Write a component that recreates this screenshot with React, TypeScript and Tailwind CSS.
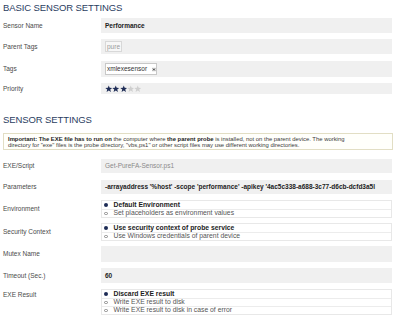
import React, { FC, ReactNode } from "react";

const font = "font-['Liberation_Sans',Arial,sans-serif]";

const Label: FC<{ text: string; className?: string }> = ({ text, className = "" }) => (
  <div className={`w-[98px] shrink-0 text-[6.5px] text-[#4a4a4a] ${className}`}>{text}</div>
);

const GrayRow: FC<{ label: string; h: string; mt: string; children?: ReactNode }> = ({ label, h, mt, children }) => (
  <div className={`flex items-center ${h} ${mt}`}>
    <Label text={label} />
    <div className="flex h-full flex-1 items-center bg-[#f0f0f0] pl-[4px] overflow-hidden whitespace-nowrap">{children}</div>
  </div>
);

const Radio: FC<{ on?: boolean; text: string; first?: boolean }> = ({ on, text, first }) => (
  <div className={`flex h-[8px] items-center pl-[2px] ${first ? "" : "border-t border-[#ececec]"}`}>
    {on ? (
      <span className="mr-[6px] h-[3.5px] w-[3.5px] rounded-full bg-[#1d2b55]" />
    ) : (
      <span className="mr-[6px] h-[3.5px] w-[3.5px] rounded-full border-[0.8px] border-[#8a8a8a]" />
    )}
    <span className={`text-[6.8px] leading-none ${on ? "font-bold text-[#1c1c1c]" : "text-[#555]"}`}>{text}</span>
  </div>
);

const OptionRow: FC<{ label: string; mt: string; options: { text: string; on?: boolean }[]; labelPt: string }> = ({ label, mt, options, labelPt }) => (
  <div className={`flex items-start ${mt}`}>
    <Label text={label} className={labelPt} />
    <div className="flex-1 border border-[#e8e8e8] bg-white">
      {options.map((o, i) => (
        <Radio key={o.text} on={o.on} text={o.text} first={i === 0} />
      ))}
    </div>
  </div>
);

const Star: FC<{ on: boolean }> = ({ on }) => (
  <svg width="7.5" height="7.5" viewBox="0 0 24 24" className="mr-[-0.2px]">
    <polygon
      points="12,1.5 15,9 23,9.3 16.8,14.3 19,22.5 12,17.8 5,22.5 7.2,14.3 1,9.3 9,9"
      fill={on ? "#1f2d57" : "#cfcfcf"}
    />
  </svg>
);

const App: FC = () => {
  return (
    <div className={`h-[333px] w-[400px] overflow-hidden bg-white pl-[3px] pr-[8px] ${font}`}>
      <h1 className="h-[18px] pt-[1px] text-[9.5px] leading-[13px] font-normal tracking-[-0.1px] text-[#2a3d5f]">
        BASIC SENSOR SETTINGS
      </h1>

      <GrayRow label="Sensor Name" h="h-[15px]" mt="mt-0">
        <span className="text-[6.5px] font-bold text-[#222]">Performance</span>
      </GrayRow>
      <GrayRow label="Parent Tags" h="h-[15px]" mt="mt-[6px]">
        <span className="border border-[#d8d8d8] bg-[#f7f7f7] px-[1px] text-[6.5px] leading-[9px] text-[#9a9a9a]">pure</span>
      </GrayRow>
      <GrayRow label="Tags" h="h-[16px]" mt="mt-[7px]">
        <span className="flex h-[12px] w-[52px] items-center border border-[#c8c8c8] bg-white pl-[1px] text-[6.5px] text-[#333]">
          xmlexesensor
          <svg width="5" height="5" viewBox="0 0 10 10" className="ml-[5px]">
            <rect x="0" y="0" width="10" height="10" fill="#e4e4e4" />
            <path d="M2.5 2.5 L7.5 7.5 M7.5 2.5 L2.5 7.5" stroke="#222" strokeWidth="2.2" />
          </svg>
        </span>
      </GrayRow>
      <GrayRow label="Priority" h="h-[11px]" mt="mt-[6px]">
        <div className="flex">
          <Star on />
          <Star on />
          <Star on />
          <Star on={false} />
          <Star on={false} />
        </div>
      </GrayRow>

      <h2 className="mt-[19px] h-[13px] text-[9.5px] leading-[13px] font-normal tracking-[-0.1px] text-[#2a3d5f]">SENSOR SETTINGS</h2>

      <div className="mt-[7px] mr-[-1px] h-[17px] border border-[#e2dec4] bg-[#fffffb] px-[4px] pt-[2px] text-[5.9px] leading-[6.3px] text-[#3a3a3a] whitespace-nowrap">
        <div>
          <b className="text-[#1c1c1c]">Important: The EXE file has to run on</b> the computer where{" "}
          <b className="text-[#1c1c1c]">the parent probe</b> is installed, not on the parent device. The working
        </div>
        <div>directory for "exe" files is the probe directory, "vbs,ps1" or other script files may use different working directories.</div>
      </div>

      <GrayRow label="EXE/Script" h="h-[14px]" mt="mt-[9px]">
        <span className="text-[6.5px] text-[#8a8a8a]">Get-PureFA-Sensor.ps1</span>
      </GrayRow>
      <GrayRow label="Parameters" h="h-[14px]" mt="mt-[7px]">
        <span className="text-[6.5px] font-bold text-[#222]">
          -arrayaddress '%host' -scope 'performance' -apikey '4ac5c338-a688-3c77-d6cb-dcfd3a5l
        </span>
      </GrayRow>

      <OptionRow
        label="Environment"
        mt="mt-[6px]"
        labelPt="pt-[4px]"
        options={[
          { text: "Default Environment", on: true },
          { text: "Set placeholders as environment values" },
        ]}
      />
      <OptionRow
        label="Security Context"
        mt="mt-[5px]"
        labelPt="pt-[4px]"
        options={[
          { text: "Use security context of probe service", on: true },
          { text: "Use Windows credentials of parent device" },
        ]}
      />

      <GrayRow label="Mutex Name" h="h-[16px]" mt="mt-[5px]" />
      <GrayRow label="Timeout (Sec.)" h="h-[15px]" mt="mt-[6px]">
        <span className="text-[6.5px] font-bold text-[#222]">60</span>
      </GrayRow>

      <OptionRow
        label="EXE Result"
        mt="mt-[6px]"
        labelPt="pt-[1px]"
        options={[
          { text: "Discard EXE result", on: true },
          { text: "Write EXE result to disk" },
          { text: "Write EXE result to disk in case of error" },
        ]}
      />
    </div>
  );
};

export default App;
